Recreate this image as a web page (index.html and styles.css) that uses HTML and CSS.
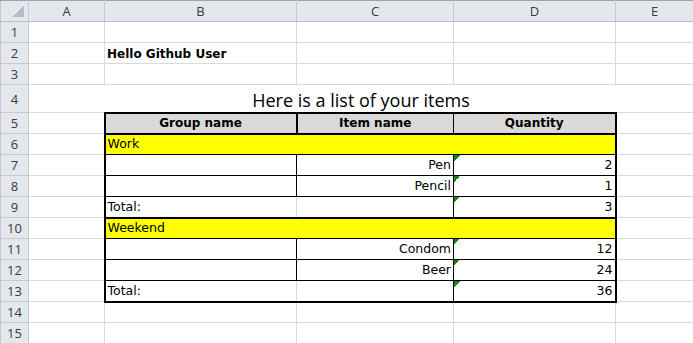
FILE: index.html
```html
<!DOCTYPE html>
<html>
<head>
<meta charset="utf-8">
<link rel="stylesheet" href="styles.css">
</head>
<body>
<table class="sheet">
  <colgroup>
    <col class="col-hdr"><col class="col-a"><col class="col-b"><col class="col-c"><col class="col-d"><col class="col-e">
  </colgroup>
  <thead>
    <tr class="row-colhdr">
      <th class="corner"></th><th>A</th><th>B</th><th>C</th><th>D</th><th>E</th>
    </tr>
  </thead>
  <tbody>
    <tr><th>1</th><td></td><td></td><td></td><td></td><td></td></tr>
    <tr><th>2</th><td></td><td class="greeting">Hello Github User</td><td></td><td></td><td></td></tr>
    <tr><th>3</th><td></td><td></td><td></td><td></td><td></td></tr>
    <tr class="row-title"><th>4</th><td colspan="5" class="title">Here is a list of your items</td></tr>
    <tr class="row-head">
      <th>5</th><td></td>
      <td class="t t-left hd hd-first">Group name</td>
      <td class="t hd">Item name</td>
      <td class="t t-right hd">Quantity</td>
      <td></td>
    </tr>
    <tr><th>6</th><td></td><td colspan="3" class="t t-left t-right group">Work</td><td></td></tr>
    <tr><th>7</th><td></td><td class="t t-left"></td><td class="t num">Pen</td><td class="t t-right num flag">2</td><td></td></tr>
    <tr><th>8</th><td></td><td class="t t-left"></td><td class="t num">Pencil</td><td class="t t-right num flag">1</td><td></td></tr>
    <tr class="row-total"><th>9</th><td></td><td class="t t-left total">Total:</td><td class="t after-total"></td><td class="t t-right num flag">3</td><td></td></tr>
    <tr><th>10</th><td></td><td colspan="3" class="t t-left t-right group">Weekend</td><td></td></tr>
    <tr><th>11</th><td></td><td class="t t-left"></td><td class="t num">Condom</td><td class="t t-right num flag">12</td><td></td></tr>
    <tr><th>12</th><td></td><td class="t t-left"></td><td class="t num">Beer</td><td class="t t-right num flag">24</td><td></td></tr>
    <tr class="row-last"><th>13</th><td></td><td class="t t-left total">Total:</td><td class="t after-total"></td><td class="t t-right num flag">36</td><td></td></tr>
    <tr><th>14</th><td></td><td></td><td></td><td></td><td></td></tr>
    <tr><th>15</th><td></td><td></td><td></td><td></td><td></td></tr>
  </tbody>
</table>
</body>
</html>
```

FILE: styles.css
```css
html, body {
  margin: 0;
  padding: 0;
  background: #ffffff;
  overflow: hidden;
}

.sheet {
  border-collapse: collapse;
  table-layout: fixed;
  width: 693px;
  font-family: "DejaVu Sans", sans-serif;
  font-size: 12.5px;
  color: #000;
}

.col-hdr { width: 28px; }
.col-a { width: 76px; }
.col-b { width: 192px; }
.col-c { width: 157px; }
.col-d { width: 162px; }
.col-e { width: 78px; }

.sheet tr { height: 21px; }
.sheet .row-title { height: 28px; }

.sheet th {
  background: #e4e7eb;
  border: 1px solid #c4c9d0;
  font-family: "Open Sans", sans-serif;
  font-weight: 400;
  font-size: 13px;
  color: #3b3b3b;
  padding: 0;
  line-height: 14px;
  text-align: center;
  vertical-align: middle;
}

.row-colhdr th {
  border-top: 1px solid #9aa5b3;
  border-bottom: 1px solid #b7bec8;
}

.sheet .corner {
  background:
    linear-gradient(to bottom right, transparent 50%, #b5bbc3 50%) right 4px bottom 4px / 11px 11px no-repeat,
    #e4e7eb;
}

.sheet td {
  border: 1px solid #d9d9d9;
  padding: 0 2px;
  line-height: 14px;
  vertical-align: bottom;
  white-space: nowrap;
  overflow: hidden;
}

.sheet td.greeting {
  font-weight: 700;
  font-size: 12px;
  padding-bottom: 2px;
}

.sheet td.title {
  font-family: "Open Sans", sans-serif;
  font-size: 18px;
  line-height: 21px;
  text-align: center;
  padding-bottom: 1px;
}

/* data table */
.sheet td.t { border: 1px solid #000; padding-bottom: 3px; }
.sheet td.t-left { border-left: 2px solid #000; }
.sheet td.t-right { border-right: 2px solid #000; }

.sheet .row-head td.t {
  border-top: 2px solid #000;
  border-bottom: 2px solid #000;
}
.sheet td.hd {
  background: #d9d9d9;
  font-weight: 700;
  font-size: 12px;
  text-align: center;
}
.sheet td.hd-first { border-right: 2px solid #000; }

.sheet td.group {
  background: #ffff00;
}

.sheet td.num { text-align: right; }

.sheet td.flag {
  background: linear-gradient(135deg, #0f8a0f 50%, transparent 50%) left top / 6px 6px no-repeat;
}

.sheet td.total { border-right: 1px solid #d9d9d9; }
.sheet td.after-total { border-left: 1px solid #d9d9d9; }

.sheet .row-total td.t { border-bottom: 2px solid #000; }
.sheet .row-last td.t { border-bottom: 2px solid #000; }
```
